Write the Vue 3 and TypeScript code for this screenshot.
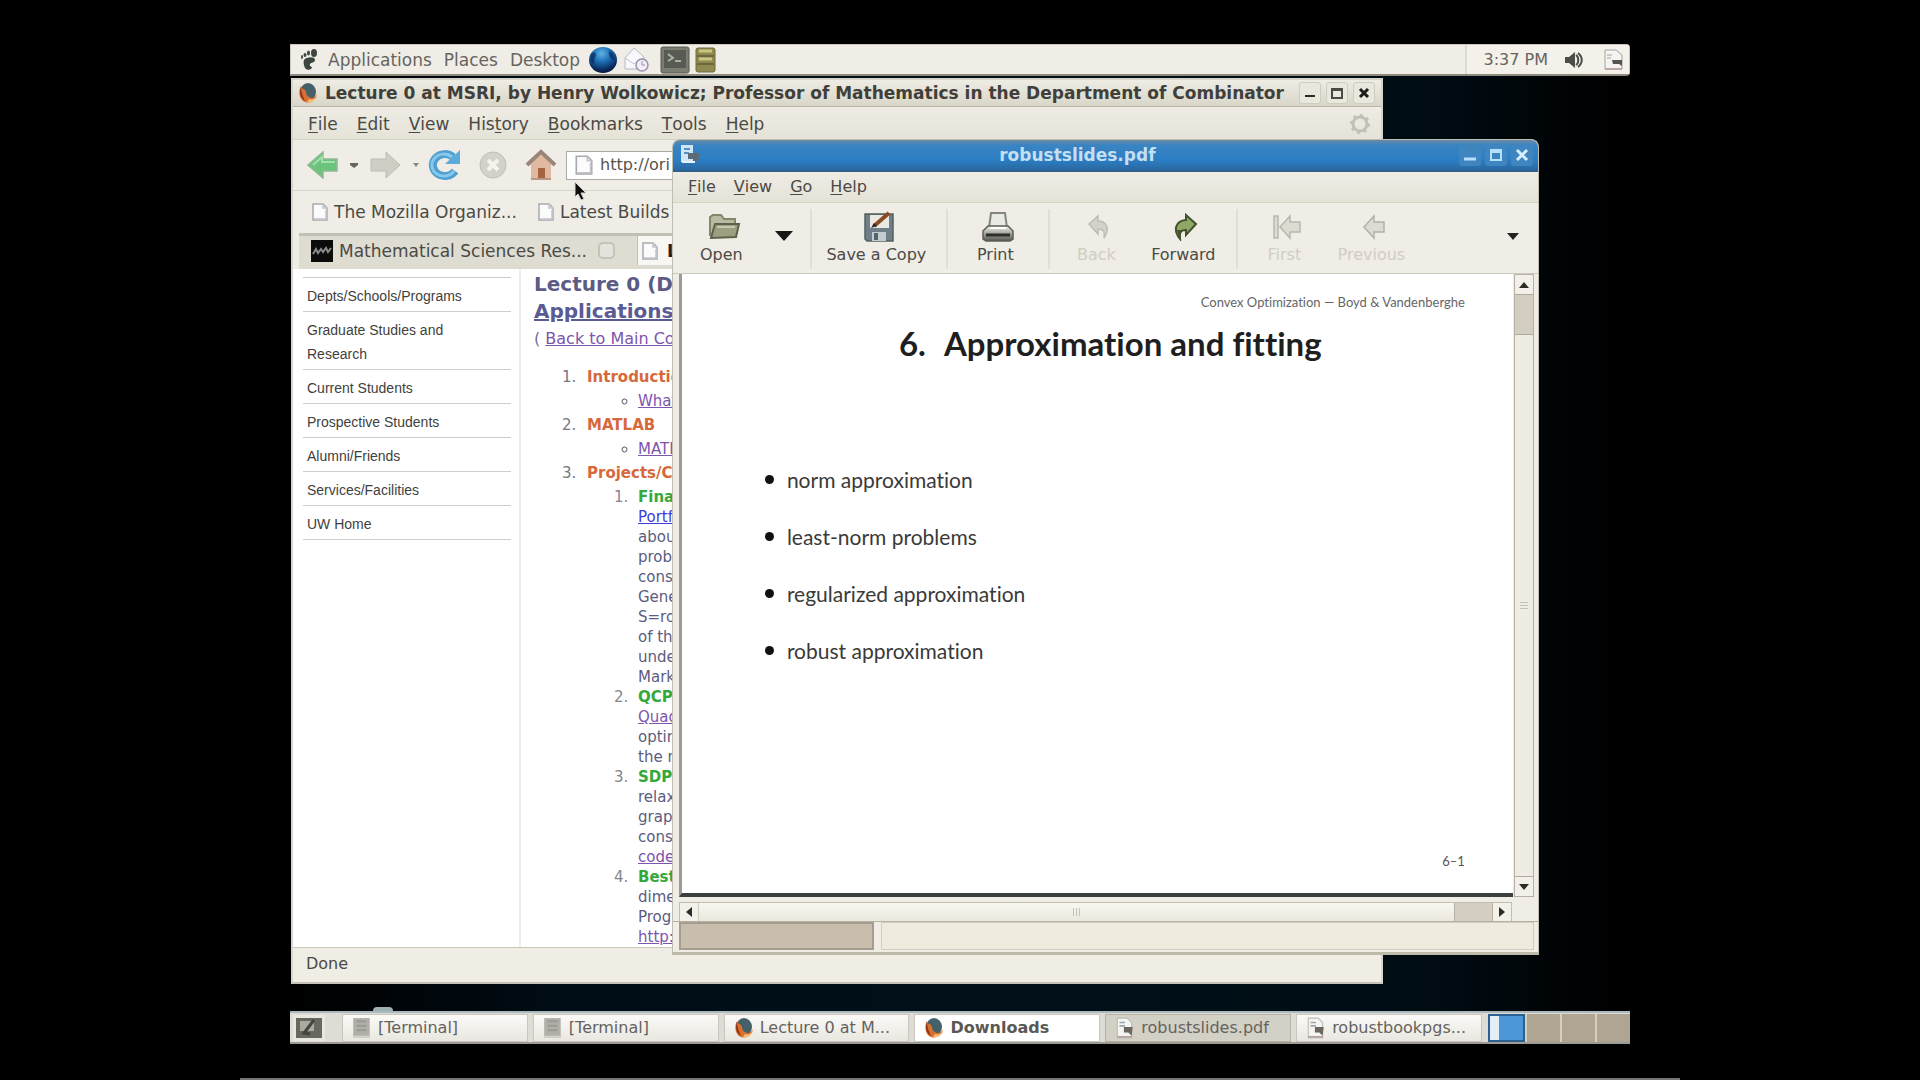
<script setup lang="ts">
interface MenuEntry { before: string; key: string; after: string }
interface Line { text: string; kind: 'text' | 'green' | 'link' | 'blue' }

const entry = (label: string, at = 0): MenuEntry => ({
  before: label.slice(0, at),
  key: label[at],
  after: label.slice(at + 1),
})

const browserMenu: MenuEntry[] = [
  entry('File'), entry('Edit'), entry('View'), entry('History', 3),
  entry('Bookmarks'), entry('Tools'), entry('Help'),
]
const viewerMenu: MenuEntry[] = [entry('File'), entry('View'), entry('Go'), entry('Help')]

const siteLinks: string[] = [
  'Depts/Schools/Programs', 'Graduate Studies and Research', 'Current Students',
  'Prospective Students', 'Alumni/Friends', 'Services/Facilities', 'UW Home',
]

const t = (text: string, kind: Line['kind'] = 'text'): Line => ({ text, kind })
const projects: Line[][] = [
  [t('Finan', 'green'), t('Portf', 'blue'), t('about'), t('probl'), t('cons'), t('Gene'), t('S=ro'), t('of the'), t('under'), t('Mark')],
  [t('QCP', 'green'), t('Quad', 'link'), t('optim'), t('the n')],
  [t('SDP', 'green'), t('relax'), t('graph'), t('cons'), t('code', 'link')],
  [t('Best', 'green'), t('dime'), t('Prog'), t('http:/', 'link')],
]

const bullets: string[] = [
  'norm approximation', 'least-norm problems', 'regularized approximation', 'robust approximation',
]

const tasks = [
  { label: '[Terminal]', icon: 'term', state: '' },
  { label: '[Terminal]', icon: 'term', state: '' },
  { label: 'Lecture 0 at M...', icon: 'fox', state: '' },
  { label: 'Downloads', icon: 'fox', state: 'urgent' },
  { label: 'robustslides.pdf', icon: 'doc', state: 'active' },
  { label: 'robustbookpgs...', icon: 'doc', state: '' },
]
</script>

<template>
  <div class="page">
    <svg width="0" height="0" class="defs" aria-hidden="true">
      <defs>
        <radialGradient id="globe" cx="45%" cy="25%" r="75%">
          <stop offset="0" stop-color="#5fb4e4" /><stop offset=".45" stop-color="#1a6cb0" /><stop offset="1" stop-color="#04103c" />
        </radialGradient>
        <linearGradient id="steel" x1="0" y1="0" x2="0" y2="1">
          <stop offset="0" stop-color="#f2f2ee" /><stop offset="1" stop-color="#55564f" />
        </linearGradient>
        <symbol id="page-icon" viewBox="0 0 18 20">
          <path d="M2 2h10l4 4v12H2z" fill="#fbfbfb" stroke="#a9a9b2" stroke-width="1.5" />
          <path d="M12 2v4h4M3 17h12V8" fill="none" stroke="#c3c3cc" stroke-width="1.5" />
        </symbol>
        <symbol id="fox-icon" viewBox="0 0 20 22">
          <ellipse cx="10" cy="10" rx="8" ry="9" fill="#46606a" />
          <path d="M3 4C0 9 1 18 7 20c6 2 11-2 12-8-2 4-5 5-8 3-4-2-2-5-4-7S3 7 3 4z" fill="#d8702f" />
          <path d="M3 5c-2 5-1 11 4 14-2-4-4-9-4-14z" fill="#8d3218" />
          <path d="M9 20c5 1 9-2 10-6-2 3-5 4-8 3z" fill="#f6bd76" />
        </symbol>
        <symbol id="doc-icon" viewBox="0 0 20 20">
          <path d="M3 1h9l4 4v14H3z" fill="#f4f4f2" stroke="#bdbdb8" />
          <path d="M5 5h5M5 8h5" stroke="#9ba3ab" stroke-width="1.5" />
          <path d="M9 9h8l-1 8-3-3H9z" fill="#6c6660" />
          <path d="M3 18h13" stroke="#a07f80" />
        </symbol>
        <symbol id="term-icon" viewBox="0 0 20 20">
          <rect x="2" y="1" width="15" height="18" fill="#b0b0a9" />
          <path d="M5 4h9M5 8h9M5 12h9" stroke="#9c9c96" stroke-width="2" />
          <path d="M2 18h15" stroke="#d2d2cc" stroke-width="2" />
        </symbol>
      </defs>
    </svg>

    <main class="desktop">
      <header class="panel top-panel">
        <nav class="panel-menu">
          <button class="foot" aria-label="Main menu">
            <svg width="20" height="24" viewBox="0 0 20 24">
              <path d="M4 12c2-3 11-4 11 0 0 3-4 2-5 4-1 1 1 3 2 3 0 3-5 4-7 1-1-2-2-6-1-8z" fill="#3c4540" />
              <ellipse cx="14" cy="5" rx="3" ry="4" fill="#3c4540" /><ellipse cx="8.500" cy="5" rx="1.500" ry="2.500" fill="#3c4540" />
              <ellipse cx="5" cy="7" rx="1.500" ry="2" fill="#3c4540" /><ellipse cx="2" cy="9" rx="1" ry="2" fill="#3c4540" />
            </svg>
          </button>
          <button>Applications</button>
          <button>Places</button>
          <button>Desktop</button>
        </nav>
        <div class="launchers">
          <button aria-label="Web browser">
            <svg width="30" height="28" viewBox="0 0 30 28"><ellipse cx="15" cy="14" rx="14" ry="13" fill="url(#globe)" /><path d="M4 7c4-2 5 2 3 5s1 5-2 6C2 15 2 10 4 7zM21 5c4 1 6 5 5 9-3 0-6-5-5-9z" fill="#0a2a60" opacity=".7" /></svg>
          </button>
          <button aria-label="Mail">
            <svg width="28" height="28" viewBox="0 0 28 28"><path d="M3 12L12 2l10 9v12H3z" fill="#f8f8fc" stroke="#b4b8c6" /><path d="M3 12l9 6 9-6" fill="none" stroke="#c0c4d0" /><circle cx="20" cy="19" r="6" fill="#f1ecf5" stroke="#9c92aa" stroke-width="1.500" /><path d="M20 15v4h3" fill="none" stroke="#9c92aa" /></svg>
          </button>
          <button aria-label="Terminal" class="gap">
            <svg width="30" height="28" viewBox="0 0 30 28"><rect x="1" y="1" width="28" height="26" rx="2" fill="#7b7d70" stroke="#55574c" /><rect x="4" y="4" width="22" height="18" fill="#585b54" /><path d="M8 8l5 4-5 3M15 15h6" stroke="#aeb0a6" stroke-width="2" fill="none" /></svg>
          </button>
          <button aria-label="Archive">
            <svg width="24" height="28" viewBox="0 0 24 28"><rect x="2" y="2" width="19" height="24" rx="2" fill="#8e8a50" stroke="#6d6a3c" /><path d="M3 10h17M3 18h17" stroke="#6b6840" stroke-width="2" /><path d="M5 5h13M5 13h13" stroke="#c9c684" stroke-width="3" /></svg>
          </button>
        </div>
        <div class="tray">
          <time>3:37 PM</time>
          <button aria-label="Volume">
            <svg width="20" height="20" viewBox="0 0 20 20"><path d="M1 7h4l6-5v16l-6-5H1z" fill="#4c4c48" /><path d="M12 5c3 2 3 8 0 10M14 3c5 4 5 10 0 14" stroke="#4c4c48" stroke-width="2" fill="none" /></svg>
          </button>
          <button aria-label="Document">
            <svg width="20" height="22" viewBox="0 0 20 22"><path d="M1 1h11l6 5v14H1z" fill="#f6f4f2" stroke="#a8a09c" /><path d="M8 11h10v6l-3-2H9z" fill="#5a5450" /><path d="M3 6h5M3 9h4" stroke="#a8a09c" /><path d="M1 20h17" stroke="#b08688" /></svg>
          </button>
        </div>
      </header>

      <div class="workspace">
        <section class="window browser">
          <div class="titlebar">
            <svg class="app-icon" width="22" height="22"><use href="#fox-icon" /></svg>
            <h1>Lecture 0 at MSRI, by Henry Wolkowicz; Professor of Mathematics in the Department of Combinator</h1>
            <div class="controls">
              <button aria-label="Minimize"><svg width="12" height="12"><path d="M1 9h10" stroke="#2b2b28" stroke-width="2" /></svg></button>
              <button aria-label="Maximize"><svg width="12" height="12"><path d="M1 2h10v9H1zM1 3h10" stroke="#4b4b46" stroke-width="2" fill="none" /></svg></button>
              <button aria-label="Close"><svg width="12" height="12"><path d="M2 2l8 8M10 2l-8 8" stroke="#1c1c1a" stroke-width="3" /></svg></button>
            </div>
          </div>
          <nav class="menubar">
            <button v-for="m in browserMenu" :key="m.key + m.after">{{ m.before }}<u>{{ m.key }}</u>{{ m.after }}</button>
            <svg class="throbber" width="22" height="22" viewBox="0 0 22 22"><circle cx="11" cy="11" r="7" fill="none" stroke="#c2c1b8" stroke-width="3" /><circle cx="11" cy="11" r="9" fill="none" stroke="#c2c1b8" stroke-width="2" stroke-dasharray="3 4" /></svg>
          </nav>
          <div class="navbar">
            <button aria-label="Back" class="nav-icon"><svg width="32" height="28" viewBox="0 0 32 28"><path d="M1 14L16 1v7h14v12H16v7z" fill="#6cc47c" stroke="#8fb895" stroke-width="1.500" /><path d="M6 14l9-8v5h13" fill="none" stroke="#a4e0ac" stroke-width="2" /></svg></button>
            <button aria-label="Back history" class="tick"><svg width="8" height="5"><path d="M0 0h8v2L4 5 0 2z" fill="#66665e" /></svg></button>
            <button aria-label="Forward" class="nav-icon"><svg width="32" height="28" viewBox="0 0 32 28"><path d="M31 14L17 1v7H2v12h15v7z" fill="#cfcdc4" stroke="#bdbbb2" /></svg></button>
            <button aria-label="Forward history" class="tick"><svg width="6" height="4"><path d="M0 0h6L3 4z" fill="#88887e" /></svg></button>
            <button aria-label="Reload" class="nav-icon wide"><svg width="34" height="32" viewBox="0 0 34 32"><path d="M27 22A12 11 0 1 1 25 8" fill="none" stroke="#4f9fd0" stroke-width="8" /><path d="M26 22A12 11 0 1 1 24 8" fill="none" stroke="#88c8ec" stroke-width="3" /><path d="M32 1v14H17z" fill="#5cabd8" /></svg></button>
            <button aria-label="Stop" class="nav-icon wide"><svg width="30" height="30" viewBox="0 0 30 30"><circle cx="15" cy="15" r="13" fill="#d3d2ca" stroke="#c0bfb6" /><path d="M10 10l10 10M20 10L10 20" stroke="#f4f3ee" stroke-width="4" /></svg></button>
            <button aria-label="Home" class="nav-icon wide"><svg width="32" height="32" viewBox="0 0 32 32"><path d="M6 15L16 6l10 9v15H6z" fill="#e0b9a0" /><path d="M2 16L16 3l14 13" fill="none" stroke="#9a8578" stroke-width="4" /><rect x="13" y="19" width="7" height="11" fill="#a4663e" /><path d="M6 30h20" stroke="#b99784" stroke-width="2" /></svg></button>
            <label class="address">
              <svg width="20" height="22"><use href="#page-icon" /></svg>
              <input type="text" value="http://ori" aria-label="Address" />
            </label>
          </div>
          <div class="bookmarks">
            <a href="#"><svg width="18" height="20"><use href="#page-icon" /></svg>The Mozilla Organiz...</a>
            <a href="#"><svg width="18" height="20"><use href="#page-icon" /></svg>Latest Builds</a>
          </div>
          <div class="tabs">
            <button class="tab">
              <svg width="22" height="22" viewBox="0 0 22 22"><rect width="22" height="22" fill="#0b0b0b" /><path d="M2 14l3-5 2 4 3-4 2 3 3-4 2 4 3-4" stroke="#8a8a8a" stroke-width="2" fill="none" /></svg>
              <span>Mathematical Sciences Res...</span>
              <svg width="20" height="20" viewBox="0 0 20 20"><rect x="2" y="2" width="15" height="15" rx="4" fill="#e4e2da" stroke="#c4c2b9" stroke-width="2" /></svg>
            </button>
            <button class="tab current"><svg width="18" height="20"><use href="#page-icon" /></svg><b>L</b></button>
          </div>
          <div class="web">
            <nav class="site-nav">
              <a v-for="l in siteLinks" :key="l" href="#">{{ l }}</a>
            </nav>
            <article class="notes">
              <h2>Lecture 0 (D<br /><a href="#">Applications</a></h2>
              <p>( <a href="#">Back to Main Co</a></p>
              <ol class="outer">
                <li><b>Introductio</b><ul><li><a href="#">What</a></li></ul></li>
                <li><b>MATLAB</b><ul><li><a href="#">MATL</a></li></ul></li>
                <li><b>Projects/C</b>
                  <ol class="inner">
                    <li v-for="(p, i) in projects" :key="i">
                      <template v-for="(l, j) in p" :key="j">
                        <a v-if="l.kind === 'link' || l.kind === 'blue'" href="#" :class="l.kind">{{ l.text }}</a>
                        <span v-else :class="l.kind">{{ l.text }}</span>
                      </template>
                    </li>
                  </ol>
                </li>
              </ol>
            </article>
          </div>
          <div class="status">Done</div>
        </section>

        <section class="window viewer">
          <div class="titlebar blue">
            <svg class="app-icon" width="20" height="22" viewBox="0 0 20 22"><path d="M1 1h12v17H1z" fill="#cfe6f8" /><path d="M4 5h6M4 9h5" stroke="#5b8fbe" stroke-width="2" /><path d="M8 9h11v6l-3 3-3-3H8z" fill="#5c6a76" /><path d="M2 18h13" stroke="#e8f2fa" stroke-width="2" /></svg>
            <h1>robustslides.pdf</h1>
            <div class="controls">
              <button aria-label="Minimize"><svg width="12" height="14"><path d="M0 11h12" stroke="#b4e0fc" stroke-width="3" /></svg></button>
              <button aria-label="Maximize"><svg width="12" height="14"><path d="M1 2h10v10H1zM1 4h10" stroke="#b4e0fc" stroke-width="2" fill="none" /></svg></button>
              <button aria-label="Close"><svg width="14" height="14"><path d="M2 2l10 10M12 2L2 12" stroke="#d4eefe" stroke-width="3" /></svg></button>
            </div>
          </div>
          <nav class="menubar">
            <button v-for="m in viewerMenu" :key="m.key + m.after">{{ m.before }}<u>{{ m.key }}</u>{{ m.after }}</button>
          </nav>
          <div class="toolbar">
            <button class="tool open">
              <svg width="34" height="28" viewBox="0 0 34 28"><path d="M3 23V4l3-2h8l3 4h11v6" fill="#b9baa0" stroke="#85876c" stroke-width="2" /><path d="M8 11h24l-3 13-25 1z" fill="#9c9f80" stroke="#5f614b" stroke-width="2" /><path d="M10 14h18" stroke="#c7c9ae" stroke-width="2" /></svg>Open
            </button>
            <button class="drop" aria-label="Recent documents"><svg width="18" height="10"><path d="M0 0h18L9 10z" fill="#161614" /></svg></button>
            <button class="tool save sep">
              <svg width="32" height="32" viewBox="0 0 32 32"><path d="M2 3h28v27H4l-2-2z" fill="#6f7f89" stroke="#54605f" stroke-width="1.500" /><rect x="7" y="4" width="19" height="13" fill="#ece8e2" /><rect x="9" y="21" width="14" height="9" fill="#c3ccd2" /><rect x="11" y="22" width="4" height="7" fill="#55636c" /><path d="M11 15L26 2" stroke="#8a4c24" stroke-width="4" /><path d="M8 17l3-5 3 3z" fill="#2f2620" /></svg>Save a Copy
            </button>
            <button class="tool print sep">
              <svg width="34" height="32" viewBox="0 0 34 32"><path d="M8 17L10 2h14l2 15z" fill="#e9e9e6" stroke="#85857f" stroke-width="2" /><path d="M2 20l5-5h20l5 5v8l-3 2H5l-3-2z" fill="url(#steel)" stroke="#5d5d57" stroke-width="1.500" /><path d="M5 24h24" stroke="#2d2d2a" stroke-width="3" /><path d="M9 17h16" stroke="#fff" stroke-width="2" /></svg>Print
            </button>
            <button class="tool wide sep" disabled>
              <svg width="24" height="28" viewBox="0 0 24 28"><path d="M2 11L11 3v5c9 0 12 8 6 17 1-7-1-9-6-9v5z" fill="#d4d1c8" stroke="#bfbcb3" stroke-width="1.500" /></svg>Back
            </button>
            <button class="tool">
              <svg width="26" height="28" viewBox="0 0 26 28"><path d="M23 11L13 2v5C2 8 0 17 7 26c-1-7 1-9 6-9v5z" fill="#8fa866" stroke="#42522c" stroke-width="2" /><path d="M4 17c1 4 2 7 4 8-1-4 0-7 3-8" fill="#42522c" /></svg>Forward
            </button>
            <button class="tool wide sep gap" disabled>
              <svg width="30" height="26" viewBox="0 0 30 26"><path d="M2 2h4v22H2zM8 13L18 2v6h10v10H18v6z" fill="#dedbd2" stroke="#b9b6ad" stroke-width="1.500" /></svg>First
            </button>
            <button class="tool" disabled>
              <svg width="24" height="26" viewBox="0 0 24 26"><path d="M2 13L12 2v6h10v10H12v6z" fill="#dedbd2" stroke="#b3b0a7" stroke-width="1.500" /></svg>Previous
            </button>
            <button class="more" aria-label="More"><svg width="12" height="7"><path d="M0 0h12L6 7z" fill="#22221f" /></svg></button>
          </div>
          <div class="doc-row">
            <article class="slide">
              <p class="running">Convex Optimization — Boyd &amp; Vandenberghe</p>
              <h2><span>6.</span>Approximation and fitting</h2>
              <ul><li v-for="b in bullets" :key="b">{{ b }}</li></ul>
              <p class="folio">6–1</p>
            </article>
            <div class="vscroll">
              <button aria-label="Scroll up"><svg width="10" height="6"><path d="M5 0l5 6H0z" fill="#2b2b28" /></svg></button>
              <div class="trough"></div>
              <div class="thumb"><i></i><i></i><i></i></div>
              <button aria-label="Scroll down"><svg width="10" height="6"><path d="M0 0h10L5 6z" fill="#2b2b28" /></svg></button>
            </div>
          </div>
          <div class="hscroll">
            <button aria-label="Scroll left"><svg width="6" height="10"><path d="M6 0v10L0 5z" fill="#2b2b28" /></svg></button>
            <div class="thumb"><i></i><i></i><i></i></div>
            <div class="trough"></div>
            <button aria-label="Scroll right"><svg width="6" height="10"><path d="M0 0v10l6-5z" fill="#2b2b28" /></svg></button>
          </div>
          <div class="viewer-status"><div class="progress"></div><div class="message"></div></div>
        </section>
        <div class="peek"></div>
        <svg class="cursor" width="14" height="21" viewBox="0 0 14 21" aria-hidden="true">
          <path d="M1 1v15l3-3 3 6 3-1-3-6h5z" fill="#111" stroke="#d8d6cf" stroke-width="1" />
        </svg>
      </div>

      <footer class="panel task-panel">
        <button class="show-desktop" aria-label="Show desktop">
          <svg width="26" height="20" viewBox="0 0 26 20"><rect width="26" height="20" fill="#67685f" /><path d="M4 3h14v10H4z" fill="#a9aaa0" /><path d="M18 2L8 15l6 1" stroke="#44453f" stroke-width="3" fill="none" /></svg>
        </button>
        <button v-for="(k, i) in tasks" :key="i" class="task" :class="k.state">
          <svg width="22" height="22"><use :href="'#' + k.icon + '-icon'" /></svg><span>{{ k.label }}</span>
        </button>
        <div class="pager"><button class="here" aria-label="Workspace 1"><i></i></button><button aria-label="Workspace 2"></button><button aria-label="Workspace 3"></button><button aria-label="Workspace 4"></button></div>
      </footer>
    </main>
    <div class="edge"></div>
  </div>
</template>

<style>
body { margin: 0; background: #000; }
</style>

<style scoped>
* { box-sizing: border-box; }
.page {
  min-height: 100vh; display: flex; flex-direction: column; background: #000;
  font-family: "DejaVu Sans", sans-serif; font-size: 17px; line-height: 20px; color: #4b4a45;
}
.defs { position: absolute; }
button { font: inherit; color: inherit; background: none; border: 0; padding: 0; margin: 0; display: flex; align-items: center; justify-content: center; white-space: pre; }
h1, h2, p, ul, ol { margin: 0; padding: 0; }
svg { flex: none; display: block; }
.desktop { flex: 1; display: flex; flex-direction: column; padding: 44px 15% 34px; margin: 0 2px; }
.edge { height: 3px; margin: 0 12.5%; background: #77757a; }

.panel { display: flex; align-items: center; background: #efede6; }
.top-panel { height: 32px; border: 1px solid #c9c7be; border-radius: 0 4px 4px 0; border-bottom: 2px solid #8d8a7d; color: #66645f; }
.panel-menu { display: flex; gap: 12px; padding-left: 9px; }
.panel-menu .foot { margin-right: -4px; }
.launchers { display: flex; align-items: center; padding-left: 8px; gap: 4px; }
.launchers .gap { margin-left: 6px; }
.tray { display: flex; align-items: center; margin-left: auto; padding: 0 5px 0 17px; gap: 16px; height: 100%; border-left: 2px solid #dddbd2; background: #f3f1ea; }
.tray time { font-size: 16px; }
.tray button:last-child { margin-left: 4px; }

.workspace { position: relative; flex: 1; min-height: 935px; background: linear-gradient(90deg, #000 0, #000d16 22%, #001019 60%, #000b12 86%, #000 99%); }
.window { position: absolute; display: flex; flex-direction: column; overflow: hidden; background: #efede5; }
.browser { left: 1px; top: 2px; bottom: 27px; width: 81.5%; border: 2px solid #d7d5cb; border-bottom-color: #c6c3b6; }
.viewer { left: 28.5%; top: 63px; bottom: 56px; width: 64.7%; border: 1px solid #bfbcb1; border-radius: 8px 8px 0 0; border-bottom: 3px solid #bdbaa9; }
.peek { position: absolute; left: 83px; bottom: 0; width: 20px; height: 4px; background: #9fb0b0; border-radius: 4px 4px 0 0; }
.cursor { position: absolute; left: 21.2%; top: 105px; }

.titlebar { display: flex; align-items: center; height: 27px; flex: none; background: linear-gradient(#eeece3, #d9d6c9); border-bottom: 1px solid #b9b5a5; padding: 0 6px 0 4px; }
.titlebar h1 { flex: 1; min-width: 0; overflow: hidden; white-space: nowrap; font-size: 17px; line-height: 24px; font-weight: bold; color: #403f3a; padding-left: 6px; }
.controls { display: flex; gap: 5px; }
.controls button { width: 22px; height: 22px; border: 1px solid #cfccc0; border-radius: 3px; background: #eae7dc; }
.titlebar.blue { height: 32px; background: linear-gradient(#6d8ba4 0, #3a84c2 5px, #2b7ec4 20px, #2a68a0 100%); border-bottom: 2px solid #2f6190; padding: 0 5px 0 7px; }
.blue h1 { color: #c4dff2; text-align: center; padding: 0 4px 0 0; }
.blue .controls { gap: 4px; }
.blue .controls button { background: #3f86c0; border-color: #3f86c0; }

.menubar { display: flex; align-items: center; flex: none; height: 31px; padding: 0 10px 0 15px; gap: 19px; background: linear-gradient(#efece5, #e5e2d7); border-bottom: 1px solid #d6d3c7; }
.browser .menubar { height: 33px; padding-top: 1px; }
.menubar u { text-underline-offset: 2px; }
.throbber { margin-left: auto; }
.viewer .menubar { gap: 18px; font-size: 16px; }

.navbar { display: flex; align-items: center; flex: none; height: 51px; padding-left: 13px; border-bottom: 1px solid #d8d5ca; }
.nav-icon { width: 34px; }
.nav-icon.wide { width: 40px; margin-right: 8px; }
.tick { width: 28px; }
.tick + .wide { margin-left: -5px; }
.address { display: flex; align-items: center; flex: 1; height: 29px; background: #fff; border: 1px solid #a6a9a6; padding-left: 7px; gap: 6px; margin-left: -3px; }
.address input { flex: 1; min-width: 0; border: 0; padding: 0; background: none; font: inherit; font-size: 16px; color: #55544f; outline: 0; }
.bookmarks { display: flex; align-items: center; flex: none; height: 42px; padding-left: 18px; gap: 20px; }
.bookmarks a { display: flex; align-items: center; gap: 5px; color: inherit; text-decoration: none; white-space: nowrap; }
.tabs { display: flex; flex: none; height: 36px; margin-left: 6px; border-top: 3px solid #c2bfb3; border-bottom: 4px solid #dedbd0; background: #efede5; }
.tab { padding: 0 20px 0 12px; gap: 6px; background: #dfdcd2; border-right: 1px solid #c4c1b5; }
.tab span { flex: 1; text-align: left; }
.tab svg:last-child { margin-left: 4px; }
.tab.current { background: #f8f7f3; gap: 8px; flex: 1; justify-content: flex-start; padding-left: 3px; }
.tab.current b { color: #222; }

.web { flex: 1; min-height: 0; display: flex; background: #fff; overflow: hidden; }
.site-nav { flex: none; width: 228px; padding: 8px 8px 0 10px; border-right: 2px solid #ecece8; font: 14px/24px "Liberation Sans", Arial, sans-serif; }
.site-nav a { display: block; border-top: 1px solid #cfcfca; padding: 6px 48px 3px 4px; color: #3f3f3d; text-decoration: none; }
.site-nav a:last-child { border-bottom: 1px solid #cfcfca; }
.notes { flex: 1; padding: 2px 0 0 13px; font-size: 15px; white-space: nowrap; color: #5c5c80; }
.notes h2 { font-size: 20px; line-height: 27px; color: #5b5b86; }
.notes h2 a { color: #5b5b94; }
.notes p { font-size: 16px; line-height: 28px; color: #7a6a96; }
.notes a { color: #7c55ac; }
.notes a.blue { color: #3c3cdc; }
.outer { padding-left: 47px; margin-top: 12px; line-height: 24px; }
.outer > li { padding-left: 6px; }
.outer > li > b { color: #d6693c; }
.outer > li::marker { color: #77777f; }
.outer ul { padding-left: 51px; list-style: circle; }
.outer ul li::marker { color: #55555f; }
.inner { padding-left: 46px; margin-top: 2px; line-height: 20px; }
.inner li { padding-left: 5px; }
.inner li::marker { color: #86868c; }
.inner li > * { display: block; }
.inner .green { color: #35a83c; font-weight: bold; }
.status { flex: none; height: 35px; padding: 6px 13px; background: #efede4; border-top: 1px solid #c9c6ba; font-size: 16px; }

.toolbar { display: flex; align-items: stretch; flex: none; height: 71px; padding: 6px 6px 0 8px; font-size: 16px; border-bottom: 1px solid #cdcabf; }
.tool { flex-direction: column; width: 76px; height: 60px; padding: 0 0 4px; }
.tool svg { margin: auto 0; }
.tool:disabled { color: #d0cdc4; }
.tool.open { width: 86px; }
.drop { width: 43px; padding-right: 8px; height: 54px; }
.sep { border-left: 2px solid #e1ded4; }
.tool.save { width: 136px; }
.tool.print { width: 102px; }
.tool.wide { width: 100px; }
.tool.gap { margin-left: 12px; }
.more { margin-left: auto; height: 54px; padding-right: 13px; }

.doc-row { flex: 1; min-height: 0; display: flex; margin: 0 4px 0 6px; }
.slide { flex: 1; display: flex; flex-direction: column; background: #fff; border-left: 3px solid #9c9b98; border-bottom: 4px solid #3c3f3f; padding: 18px 48px 22px 83px; font-family: Lato, "Open Sans", sans-serif; font-variant-ligatures: none; color: #3a3a38; }
.running { text-align: right; font-size: 13px; line-height: 20px; color: #666; }
.slide h2 { font-size: 33px; line-height: 40px; color: #1f1f1f; margin: 11px 0 0 134px; white-space: nowrap; }
.slide h2 span { margin-right: 18px; }
.slide ul { list-style: none; padding: 88px 0 0; }
.slide li { display: flex; align-items: center; gap: 13px; font-size: 21px; line-height: 57px; }
.slide li::before { content: ""; width: 9px; height: 9px; border-radius: 50%; background: #111; }
.folio { margin-top: auto; text-align: right; font-size: 13px; color: #555; }
.vscroll { flex: none; width: 20px; margin-left: 1px; display: flex; flex-direction: column; border: 1px solid #b5b2a5; }
.vscroll button { height: 19px; background: #f2f0e8; }
.vscroll .trough { height: 41px; background: #d3cec0; border: solid #aeab9e; border-width: 1px 0; }
.vscroll .thumb { flex: 1; flex-direction: column; background: #efede3; border-bottom: 1px solid #aeab9e; }
.thumb { display: flex; align-items: center; justify-content: center; gap: 2px; }
.vscroll i { width: 8px; height: 1px; background: #c4c1b6; }
.hscroll { flex: none; display: flex; height: 19px; margin: 5px 26px 0 6px; border: 1px solid #c2bfb2; border-bottom: 0; }
.hscroll button { width: 18px; background: #f2f0e8; }
.hscroll .thumb { flex: 1; background: linear-gradient(#f9f7f1, #ebe8dc); border-left: 1px solid #cfccc0; }
.hscroll i { width: 1px; height: 8px; background: #c4c1b6; }
.hscroll .trough { width: 39px; background: #d5cfc3; border: solid #b5b2a5; border-width: 0 1px; }
.viewer-status { flex: none; display: flex; gap: 7px; height: 31px; padding: 0 4px 2px 6px; border-top: 1px solid #b5b2a5; }
.progress { width: 195px; background: #c9bead; border: 2px solid #a79d8e; }
.message { flex: 1; background: #efecdf; border: 1px solid #d2cfbf; }

.task-panel { height: 33px; padding-left: 3px; background: #dedcd5; border-top: 2px solid #a9b9bd; border-bottom: 2px solid #9b9a93; gap: 4px; }
.show-desktop { width: 32px; height: 26px; margin-right: 13px; background: #e9e7e0; }
.task { flex: 1; min-width: 0; height: 28px; justify-content: flex-start; gap: 5px; padding: 0 0 0 8px; overflow: hidden; background: linear-gradient(#fbfaf7, #e9e7e0); border: 1px solid #c8c6be; color: #65635e; font-size: 16px; }
.task + .task { margin-left: 1px; }
.task.urgent { background: #fff; font-weight: bold; color: #5a5854; }
.task.active { background: #d3d0c5; border-color: #b4b1a6; }
.pager { display: flex; gap: 2px; width: 142px; height: 28px; margin-left: 2px; background: #d6cfc0; }
.pager button { flex: 1; background: #b0a592; }
.pager .here { background: #4b97d8; border: 2px solid #2c5f92; justify-content: flex-start; }
.pager .here i { width: 9px; height: 100%; background: #e3eef6; }
</style>
